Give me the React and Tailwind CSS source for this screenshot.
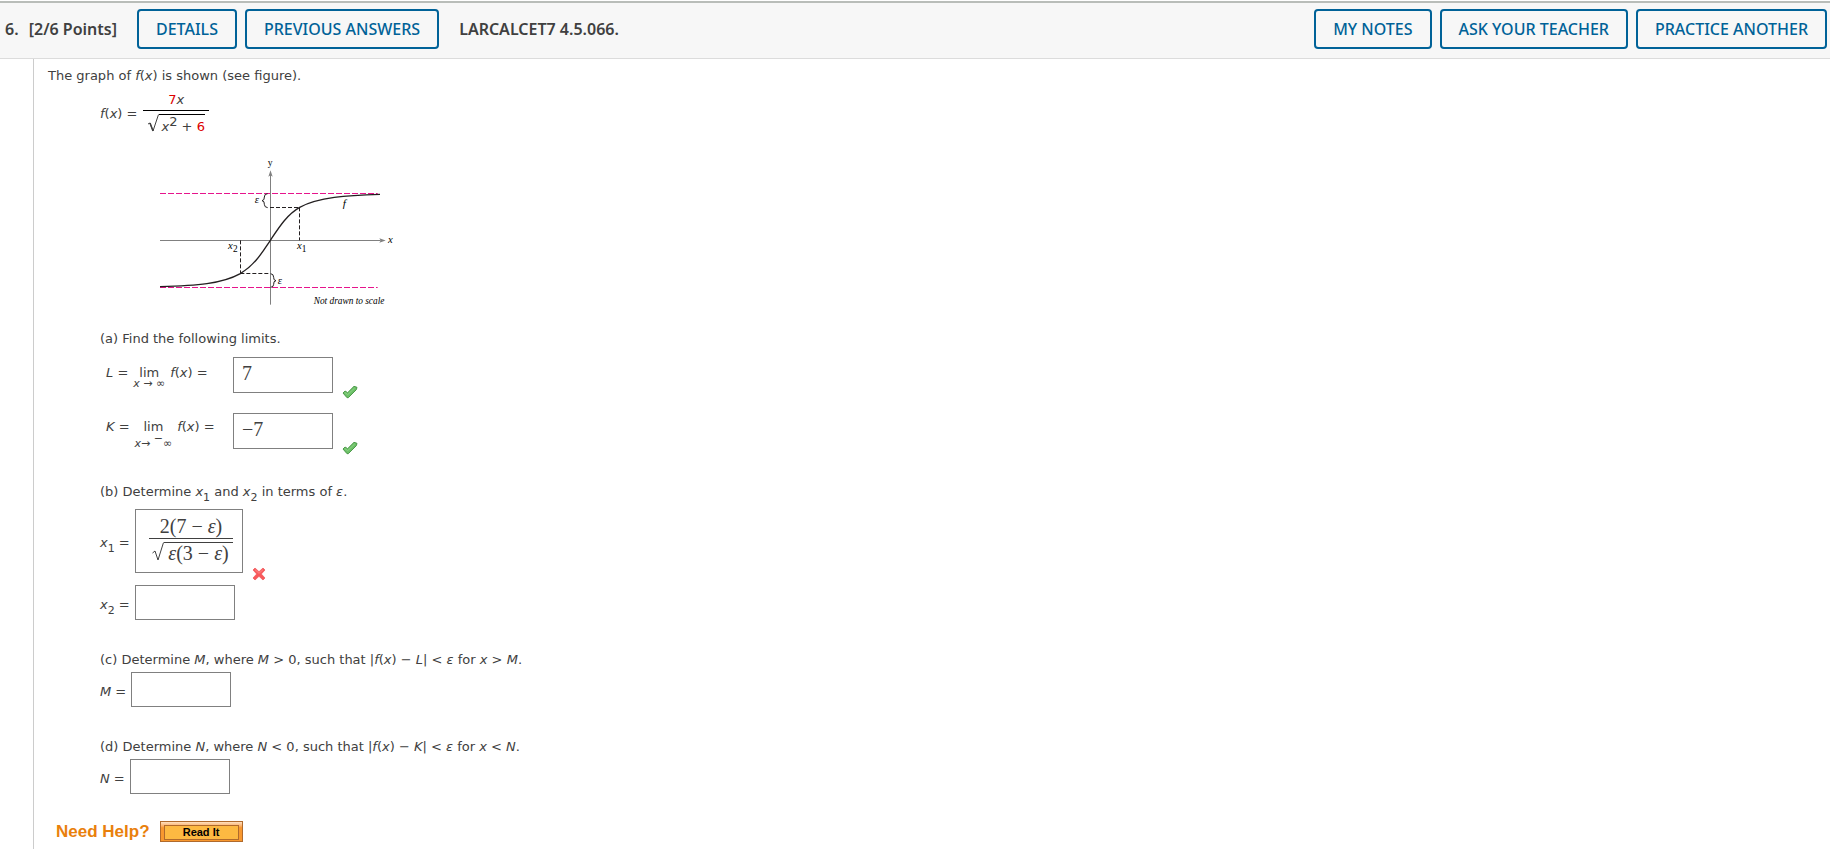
import { useState } from "react";

const headerButton =
  "h-10 rounded border-2 border-[#006298] bg-[#f7f7f7] px-[17px] text-base font-medium text-[#006298] whitespace-nowrap cursor-pointer";
const answerBox =
  "w-[100px] border border-[#808080] bg-white px-2 pb-1 font-['Liberation_Serif',serif] text-[20px] text-[#404040] outline-none";

function Sub({ children }) {
  return <sub className="bottom-[-5px] text-[11px]">{children}</sub>;
}

function Fx() {
  return (
    <>
      <i>f</i>(<i>x</i>)
    </>
  );
}

function CheckMark() {
  return (
    <svg
      className="ml-[9px] mt-[28px] h-[14px] w-4 shrink-0"
      viewBox="0 0 48 42"
      role="img"
      aria-label="Correct"
    >
      <path
        d="M3 24 L9 18 L17 23 L36 4 L45 7 L43 14 L19 38 L15 38 Z"
        fill="#6cc067"
        stroke="#4c9a4a"
        strokeWidth="3"
        strokeLinejoin="round"
      />
      <path d="M8 22 L17 29 L38 9" fill="none" stroke="#8ed487" strokeWidth="3" />
    </svg>
  );
}

function CrossMark() {
  return (
    <svg
      className="ml-[9px] mt-[58px] h-[14px] w-[14px] shrink-0"
      viewBox="0 0 42 42"
      role="img"
      aria-label="Incorrect"
    >
      <path
        d="M9 3 L21 14 L33 3 L39 9 L28 21 L39 33 L33 39 L21 28 L9 39 L3 33 L14 21 L3 9 Z"
        fill="#f8595b"
        stroke="#ee5053"
        strokeWidth="2"
        strokeLinejoin="round"
      />
      <path d="M9 8 L21 19 L33 8" fill="none" stroke="#ff8585" strokeWidth="3" />
    </svg>
  );
}

function Graph() {
  return (
    <svg
      className="ml-10 mt-[15px] h-[165px] w-[270px]"
      viewBox="0 0 810 495"
      role="img"
      aria-label="Graph of f with two horizontal asymptotes"
    >
      <g fill="none" stroke="#808080" strokeWidth="3">
        <path d="M60 271.5 H722" />
        <path d="M391.5 464 V74" />
      </g>
      <path d="M737 271.5 L718 265 L722 271.5 L718 278 Z" fill="#808080" />
      <path d="M391.5 61 L385 80 L391.5 76 L398 80 Z" fill="#808080" />

      <g stroke="#e6148c" strokeWidth="3" strokeDasharray="18 6">
        <path d="M60 130.5 H713" />
        <path d="M60 412.5 H713" />
      </g>

      <g fill="none" stroke="#231f20" strokeWidth="3" strokeDasharray="12 6">
        <path d="M390 172.5 H479" />
        <path d="M478.5 172 V271" />
        <path d="M301.5 271 V370" />
        <path d="M301 370.5 H391" />
      </g>

      <path
        d="M60 410 C170 407 245 402 301 371 C345 345 368 305 391 271 C415 235 440 194 479 172 C535 142 620 136 720 133"
        fill="none"
        stroke="#231f20"
        strokeWidth="4"
      />

      <g fill="none" stroke="#231f20" strokeWidth="3">
        <path d="M383 131 Q373 131 373 141 Q374 151 366 152 Q374 153 373 163 Q373 172 383 173" />
        <path d="M392 371 Q401 372 401 382 Q400 391 408 392 Q400 393 401 403 Q401 411 392 412" />
      </g>

      <g className="font-['Liberation_Serif',serif] italic" fill="#000000" fontSize="32">
        <text x="383" y="47" fontStyle="normal" fontSize="29">y</text>
        <text x="744" y="279">x</text>
        <text x="344" y="159">ε</text>
        <text x="413" y="402">ε</text>
        <text x="608" y="170" fontSize="34">f</text>
        <text x="264" y="296">x</text>
        <text x="279" y="305" fontStyle="normal" fontSize="28">2</text>
        <text x="471" y="296">x</text>
        <text x="485" y="305" fontStyle="normal" fontSize="28">1</text>
        <text x="521" y="463" fontSize="28">Not drawn to scale</text>
      </g>
    </svg>
  );
}

export default function App() {
  const [answers, setAnswers] = useState({
    L: "7",
    K: "−7",
    x2: "",
    M: "",
    N: "",
  });

  const handleChange = (e) =>
    setAnswers((prev) => ({ ...prev, [e.target.id]: e.target.value }));

  return (
    <div className="flex min-h-screen flex-col bg-white font-['DejaVu_Sans',sans-serif] text-[13px] leading-4 text-[#404040]">
      <div className="h-px" />
      <header className="flex h-[58px] items-center gap-2 border-t-2 border-b border-t-[#b9bdb9] border-b-[#dcdcdc] bg-[#f7f7f7] pl-[5px] pr-[3px] pb-1 font-['Noto_Sans',sans-serif] text-base text-[#404040]">
        <h1 className="mr-3 whitespace-nowrap font-semibold">
          6. <span className="ml-[6px]">[2/6 Points]</span>
        </h1>
        <button className={headerButton}>DETAILS</button>
        <button className={headerButton}>PREVIOUS ANSWERS</button>
        <span className="ml-3 mr-auto font-semibold">LARCALCET7 4.5.066.</span>
        <button className={headerButton}>MY NOTES</button>
        <button className={headerButton}>ASK YOUR TEACHER</button>
        <button className={headerButton}>PRACTICE ANOTHER</button>
      </header>

      <main className="ml-[33px] flex-1 border-l border-[#cccccc] pb-[6px] pl-[14px] pt-[9px]">
        <p>
          The graph of <Fx /> is shown (see figure).
        </p>

        <div className="ml-[52px]">
          <div className="mt-2 flex items-center gap-[6px]">
            <span>
              <Fx /> =
            </span>
            <div>
              <div className="border-b border-black pb-[2px] text-center">
                <span className="text-[#dd0000]">7</span>
                <i>x</i>
              </div>
              <div className="flex px-1 pt-[3px]">
                <svg className="h-5 w-3" viewBox="0 0 12 20" aria-hidden="true">
                  <path d="M1 10 L3 9 L6 17 L11.5 0.5" fill="none" stroke="#404040" />
                  <path d="M3 9 L6 17" stroke="#404040" strokeWidth="1.6" />
                </svg>
                <div className="border-t border-black pl-[2px] pt-1">
                  <i>x</i>
                  <sup className="top-[-5px] text-[13px]">2</sup> +{" "}
                  <span className="text-[#dd0000]">6</span>
                </div>
              </div>
            </div>
          </div>

          <Graph />

          <p className="mt-4">(a) Find the following limits.</p>
          <div className="mt-[10px] flex items-start">
            <label htmlFor="L" className="flex w-[133px] pl-[6px] pt-2">
              <i>L</i>&nbsp;=
              <span className="mx-[5px] flex flex-col items-center">
                lim
                <span className="text-[11px] leading-[6px]">
                  <i>x</i> → ∞
                </span>
              </span>
              <span>
                <Fx /> =
              </span>
            </label>
            <input id="L" className={`${answerBox} h-9`} value={answers.L} onChange={handleChange} />
            <CheckMark />
          </div>
          <div className="mt-[14px] flex items-start">
            <label htmlFor="K" className="flex w-[133px] pl-[6px] pt-[6px]">
              <i>K</i>&nbsp;=
              <span className="mx-[5px] flex flex-col items-center">
                lim
                <span className="pt-1 text-[11px] leading-[10px]">
                  <i>x</i>→ <sup className="top-[-5px] text-[11px]">−</sup>∞
                </span>
              </span>
              <span>
                <Fx /> =
              </span>
            </label>
            <input id="K" className={`${answerBox} h-9`} value={answers.K} onChange={handleChange} />
            <CheckMark />
          </div>

          <p className="mt-[29px]">
            (b) Determine <i>x</i>
            <Sub>1</Sub> and <i>x</i>
            <Sub>2</Sub> in terms of <i>ε</i>.
          </p>
          <div className="mt-[9px] flex items-start">
            <span id="x1-label" className="w-[35px] pt-[26px]">
              <i>x</i>
              <Sub>1</Sub> =
            </span>
            <div
              role="textbox"
              aria-labelledby="x1-label"
              tabIndex={0}
              className="h-16 w-[108px] border border-[#808080] pl-[13px] pr-[9px] pt-[6px] font-['Liberation_Serif',serif] text-[20px] leading-5"
            >
              <div className="border-b border-[#404040] pb-[2px] text-center">
                2(7 − <i>ε</i>)
              </div>
              <div className="flex pl-[3px] pt-[3px]">
                <svg className="h-5 w-3" viewBox="0 0 12 20" aria-hidden="true">
                  <path d="M0.5 11 L3 9 L6 18 L11.5 0.5" fill="none" stroke="#404040" />
                </svg>
                <div className="flex-1 border-t border-[#404040] text-center">
                  <i>ε</i>(3 − <i>ε</i>)
                </div>
              </div>
            </div>
            <CrossMark />
          </div>
          <div className="mt-1 flex items-start">
            <label htmlFor="x2" className="w-[35px] pt-3">
              <i>x</i>
              <Sub>2</Sub> =
            </label>
            <input id="x2" className={`${answerBox} h-[35px]`} value={answers.x2} onChange={handleChange} />
          </div>

          <p className="mt-8">
            (c) Determine <i>M</i>, where <i>M</i> &gt; 0, such that |<Fx /> − <i>L</i>| &lt;{" "}
            <i>ε</i> for <i>x</i> &gt; <i>M</i>.
          </p>
          <div className="mt-1 flex items-start gap-[5px]">
            <label htmlFor="M" className="pt-3">
              <i>M</i> =
            </label>
            <input id="M" className={`${answerBox} h-[35px]`} value={answers.M} onChange={handleChange} />
          </div>

          <p className="mt-8">
            (d) Determine <i>N</i>, where <i>N</i> &lt; 0, such that |<Fx /> − <i>K</i>| &lt;{" "}
            <i>ε</i> for <i>x</i> &lt; <i>N</i>.
          </p>
          <div className="mt-1 flex items-start gap-[5px]">
            <label htmlFor="N" className="pt-3">
              <i>N</i> =
            </label>
            <input id="N" className={`${answerBox} h-[35px]`} value={answers.N} onChange={handleChange} />
          </div>
        </div>

        <div className="ml-2 mt-[27px] flex items-center gap-[10px] font-['Liberation_Sans',sans-serif] font-bold">
          <span className="text-[17px] text-[#e9800c]">Need Help?</span>
          <button className="h-[21px] w-[83px] cursor-pointer border border-[#b06a2c] bg-linear-to-b from-[#fde0c0] to-[#f8982f] to-30% p-[3px] text-[11px] leading-[13px] text-black">
            <span className="block border border-[#b06a2c] bg-[#fdb942]">Read It</span>
          </button>
        </div>
      </main>
    </div>
  );
}
